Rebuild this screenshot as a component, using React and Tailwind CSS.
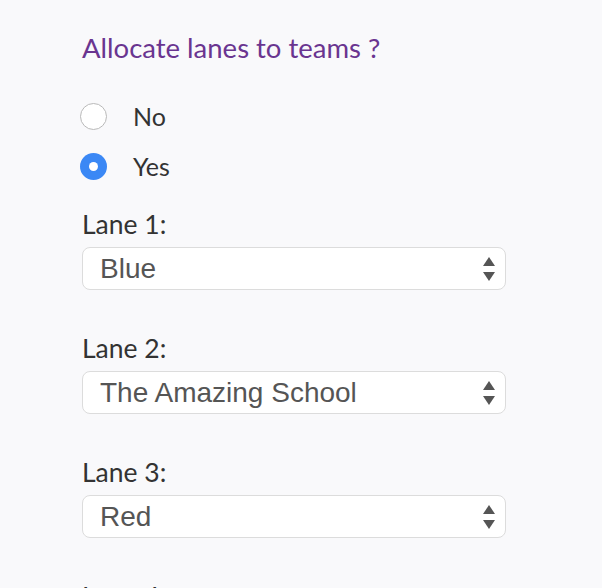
import { useState } from 'react';

const lanes = [
  { id: 1, value: 'Blue' },
  { id: 2, value: 'The Amazing School' },
  { id: 3, value: 'Red' },
  { id: 4, value: 'Green' },
];

const teams = ['Blue', 'Red', 'Green', 'The Amazing School'];

function Radio({ checked, label, onClick }) {
  return (
    <button type="button" onClick={onClick} className="flex h-[50px] items-center gap-[26px] text-left">
      {checked ? (
        <span className="flex h-[27px] w-[27px] items-center justify-center rounded-full bg-[#3b88f5]">
          <span className="h-[9px] w-[9px] rounded-full bg-white" />
        </span>
      ) : (
        <span className="h-[27px] w-[27px] rounded-full border border-[#b9b9b9] bg-white" />
      )}
      <span className="text-[25px] leading-none text-[#333]">{label}</span>
    </button>
  );
}

function LaneSelect({ lane }) {
  const [value, setValue] = useState(lane.value);
  return (
    <div className="mb-[44px]">
      <label className="block h-[28px] text-[26.5px] leading-[28px] text-[#333]">Lane {lane.id}:</label>
      <div className="relative mt-[9px] w-[424px]">
        <select
          value={value}
          onChange={(e) => setValue(e.target.value)}
          className="h-[43px] w-full appearance-none rounded-[8px] border border-[#dcdcdc] bg-white pl-[17px] text-[28px] text-[#555] outline-none [font-family:'Liberation_Sans',Arial,sans-serif]"
        >
          {teams.map((t) => (
            <option key={t}>{t}</option>
          ))}
        </select>
        <svg className="pointer-events-none absolute right-[10px] top-[9px]" width="14" height="26" viewBox="0 0 14 26">
          <path d="M7 1 L13 10 L1 10 Z" fill="#555" />
          <path d="M1 16 L13 16 L7 25 Z" fill="#555" />
        </svg>
      </div>
    </div>
  );
}

export default function App() {
  const [allocate, setAllocate] = useState(true);

  return (
    <div className="min-h-screen overflow-hidden bg-[#f9f9fb] pl-[80px] pt-[33px] [font-family:Lato,'Noto_Sans',sans-serif]">
      <h2 className="h-[30px] pl-[2px] text-[27.5px] leading-[30px] text-[#6a3590]">Allocate lanes to teams ?</h2>
      <div className="mt-[28px] flex flex-col">
        <Radio checked={!allocate} label="No" onClick={() => setAllocate(false)} />
        <Radio checked={allocate} label="Yes" onClick={() => setAllocate(true)} />
      </div>
      {allocate && (
        <div className="mt-[19px] pl-[2px]">
          {lanes.map((lane) => (
            <LaneSelect key={lane.id} lane={lane} />
          ))}
        </div>
      )}
    </div>
  );
}
